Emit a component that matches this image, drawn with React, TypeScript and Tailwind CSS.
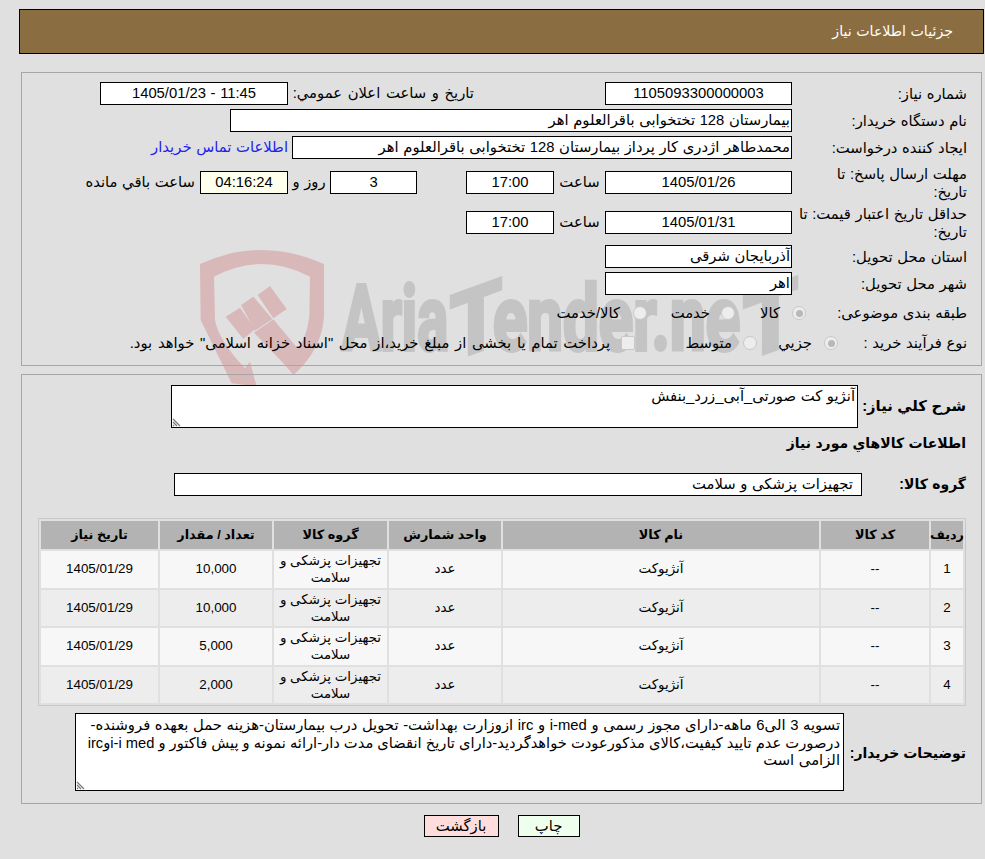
function Box({ children, className = '', bg = 'bg-white' }: { children?: React.ReactNode; className?: string; bg?: string }) {
  return (
    <div className={`h-[23px] shrink-0 border border-black text-center leading-[21px] ${bg} ${className}`}>{children}</div>
  );
}

function Radio({ on = false }: { on?: boolean }) {
  return (
    <span className="flex h-[14px] w-[14px] shrink-0 items-center justify-center rounded-full border border-[#c8c8c8] bg-[#ededed]">
      {on && <span className="h-[7px] w-[7px] rounded-full bg-[#b8b8b8]" />}
    </span>
  );
}

function Label({ children, className = 'w-[175px] pl-[5px]' }: { children: React.ReactNode; className?: string }) {
  return <div className={`shrink-0 leading-[18px] ${className}`}>{children}</div>;
}

function Grip() {
  return (
    <svg className="absolute bottom-0 left-0" width="11" height="11" viewBox="0 0 11 11">
      <path d="M1 3L8 10M1 6L5 10M1 9L2 10" stroke="#777" strokeWidth="1.2" />
    </svg>
  );
}

function Watermark() {
  return (
    <svg className="pointer-events-none absolute left-[190px] top-[240px] [direction:ltr]" width="620" height="150" viewBox="0 0 620 150">
      <g transform="scale(0.3333)" fill="#d9b8ba">
        <path d="M125 430L32 240L30 72Q215 -12 402 72L402 230Q395 330 310 405L310 345Q350 300 358 230L360 110Q215 34 72 110L75 240Q85 300 165 385L180 365L200 440Z" />
        <path d="M107 230L150 203L195 268L160 297Z" />
        <path d="M153 195L190 170L247 237L195 272Z" />
        <path d="M203 165L240 138L290 207L250 235Z" />
        <path d="M192 278L250 238L335 340L310 405L285 375Z" />
      </g>
      <g fill="#c4c4c4" stroke="#c4c4c4" strokeWidth="4" fontFamily="Roboto, sans-serif" fontWeight="700" fontSize="90">
        <text x="152" y="110" textLength="106" lengthAdjust="spacingAndGlyphs">Aria</text>
        <text transform="translate(260 121) skewY(-20)" textLength="52" lengthAdjust="spacingAndGlyphs">T</text>
        <text x="303" y="110" textLength="247" lengthAdjust="spacingAndGlyphs">ender.ne</text>
        <text transform="translate(553 121) skewY(-20)" textLength="55" lengthAdjust="spacingAndGlyphs">T</text>
      </g>
    </svg>
  );
}

const rows = [
  ['1', '10,000'],
  ['2', '10,000'],
  ['3', '5,000'],
  ['4', '2,000'],
];

export default function App() {
  return (
    <div dir="rtl" className="relative min-h-[859px] bg-[#e0e0e0] pr-[1px] pl-[19px] pt-[9px] font-['Liberation_Sans','DejaVu_Sans',sans-serif] text-[14.8px] text-black [word-spacing:0.5px]">
      <Watermark />
      <div className="relative flex h-[45px] items-center border border-black bg-[#8b6d42] pr-[30px] text-[14.2px] text-white">جزئیات اطلاعات نیاز</div>

      <div className="relative mx-[2px] mt-[18px] h-[294px] border border-[#a6a6a6] pr-[14px] pt-[9px]">
        <div className="flex h-[23px] items-center">
          <Label>شماره نیاز:</Label>
          <Box className="w-[187px]">1105093300000003</Box>
          <div className="w-[131px] shrink-0" />
          <div className="w-[181px] shrink-0 whitespace-nowrap [word-spacing:1.5px]">تاریخ و ساعت اعلان عمومي:</div>
          <Box className="mr-[5px] w-[188px]">11:45 - 1405/01/23</Box>
        </div>
        <div className="mt-[4px] flex h-[23px] items-center">
          <Label>نام دستگاه خریدار:</Label>
          <Box className="w-[562px] pr-[1px] text-right">بیمارستان 128 تختخوابی باقرالعلوم اهر</Box>
        </div>
        <div className="mt-[4px] flex h-[23px] items-center">
          <Label>ایجاد کننده درخواست:</Label>
          <Box className="w-[500px] pr-[1px] text-right">محمدطاهر اژدری کار پرداز بیمارستان 128 تختخوابی باقرالعلوم اهر</Box>
          <a className="mr-[4px] whitespace-nowrap text-[#2222ee]">اطلاعات تماس خریدار</a>
        </div>
        <div className="mt-[5px] flex h-[37px] items-center">
          <Label>مهلت ارسال پاسخ: تا<br />تاریخ:</Label>
          <Box className="w-[187px]">1405/01/26</Box>
          <div className="w-[51px] shrink-0 text-center">ساعت</div>
          <Box className="w-[88px]">17:00</Box>
          <div className="w-[49px] shrink-0" />
          <Box className="w-[87px]">3</Box>
          <div className="w-[42px] shrink-0 text-center">روز و</div>
          <Box className="w-[88px]" bg="bg-[#ffffee]">04:16:24</Box>
          <div className="mr-[5px] whitespace-nowrap">ساعت باقي مانده</div>
        </div>
        <div className="mt-[3px] flex h-[37px] items-center">
          <Label>حداقل تاریخ اعتبار قیمت: تا<br />تاریخ:</Label>
          <Box className="w-[187px]">1405/01/31</Box>
          <div className="w-[51px] shrink-0 text-center">ساعت</div>
          <Box className="w-[88px]">17:00</Box>
        </div>
        <div className="mt-[4px] flex h-[23px] items-center">
          <Label>استان محل تحویل:</Label>
          <Box className="w-[187px] pr-[1px] text-right">آذربایجان شرقی</Box>
        </div>
        <div className="mt-[4px] flex h-[23px] items-center">
          <Label>شهر محل تحویل:</Label>
          <Box className="w-[187px] pr-[1px] text-right">اهر</Box>
        </div>
        <div className="mt-[6px] flex h-[24px] items-center">
          <Label className="w-[161px]">طبقه بندی موضوعی:</Label>
          <Radio on />
          <span className="mr-[12px] w-[20px]">کالا</span>
          <span className="mr-[25px]"><Radio /></span>
          <span className="mr-[11px] w-[40px]">خدمت</span>
          <span className="mr-[23px]"><Radio /></span>
          <span className="mr-[13px]">کالا/خدمت</span>
        </div>
        <div className="mt-[6px] flex h-[24px] items-center">
          <Label className="w-[129px]">نوع فرآیند خرید :</Label>
          <Radio on />
          <span className="mr-[12px] w-[34px]">جزیي</span>
          <span className="mr-[21px]"><Radio /></span>
          <span className="mr-[11px] w-[45px]">متوسط</span>
          <span className="mr-[52px] h-[14px] w-[14px] shrink-0 rounded-[2px] border border-[#c8c8c8] bg-[#ededed]" />
          <span className="mr-[11px] whitespace-nowrap [word-spacing:1.6px]">پرداخت تمام یا بخشی از مبلغ خرید،از محل "اسناد خزانه اسلامی" خواهد بود.</span>
        </div>
      </div>

      <div className="relative mx-[2px] mt-[8px] h-[430px] border border-[#a6a6a6] pr-[15px] pt-[10px]">
        <div className="flex h-[44px] items-start">
          <div className="w-[108px] shrink-0 pt-[11px] font-bold leading-[20px]">شرح کلي نیاز:</div>
          <div className="relative h-[43px] w-[687px] border border-black bg-white pr-[2px] leading-[20px]">
            آنژیو کت صورتی_آبی_زرد_بنفش
            <Grip />
          </div>
        </div>
        <div className="mt-[4px] text-[14px] font-bold leading-[20px]">اطلاعات کالاهاي مورد نیاز</div>
        <div className="mt-[20px] flex h-[23px] items-center">
          <div className="w-[104px] shrink-0 text-[14px] font-bold">گروه کالا:</div>
          <Box className="w-[688px] pr-[8px] text-right">تجهیزات پزشکی و سلامت</Box>
        </div>

        <div className="mt-[22px] grid w-[928px] grid-cols-[32px_108px_316px_112px_113px_112px_117px] gap-[2px] border border-[#c8c8c8] p-[2px] text-center text-[13.4px] [word-spacing:0px]">
          {['ردیف', 'کد کالا', 'نام کالا', 'واحد شمارش', 'گروه کالا', 'تعداد / مقدار', 'تاریخ نیاز'].map((h) => (
            <div key={h} className="flex h-[28px] items-center justify-center whitespace-nowrap bg-[#b3b3b3] text-[12.8px] font-bold">{h}</div>
          ))}
          {rows.map(([n, q], i) => {
            const bg = i % 2 === 0 ? 'bg-[#f7f7f7]' : 'bg-[#ededed]';
            const cell = `flex h-[36.5px] items-center justify-center ${bg}`;
            return (
              <div key={n} className="contents">
                <div className={cell}>{n}</div>
                <div className={cell}>--</div>
                <div className={cell}>آنژیوکت</div>
                <div className={cell}>عدد</div>
                <div className={`${cell} leading-[17px]`}>تجهیزات پزشکی و سلامت</div>
                <div className={cell}>{q}</div>
                <div className={cell}>1405/01/29</div>
              </div>
            );
          })}
        </div>

        <div className="mt-[7px] flex items-start">
          <div className="w-[122px] shrink-0 whitespace-nowrap pt-[30px] text-[14px] font-bold leading-[20px] [word-spacing:0px]">توضیحات خریدار:</div>
          <div className="relative h-[78px] w-[769px] whitespace-nowrap border border-black bg-white pr-[3px] pt-[3px] leading-[17.5px]">
            تسویه 3 الی6 ماهه-دارای مجوز رسمی و i-med و irc ازوزارت بهداشت- تحویل درب بیمارستان-هزینه حمل بعهده فروشنده-
            <br />
            <span className="text-[14.7px] [word-spacing:0px]">درصورت عدم تایید کیفیت،کالای مذکورعودت خواهدگردید-دارای تاریخ انقضای مدت دار-ارائه نمونه و پیش فاکتور و i-i medوirc</span>
            <br />
            الزامی است
            <Grip />
          </div>
        </div>
      </div>

      <div className="relative mt-[11px] flex justify-center gap-[19px]">
        <div className="h-[22px] w-[62px] border border-black bg-[#eeffee] text-center leading-[20px]">چاپ</div>
        <div className="h-[22px] w-[75px] border border-black bg-[#ffdddd] text-center leading-[20px]">بازگشت</div>
      </div>
    </div>
  );
}
